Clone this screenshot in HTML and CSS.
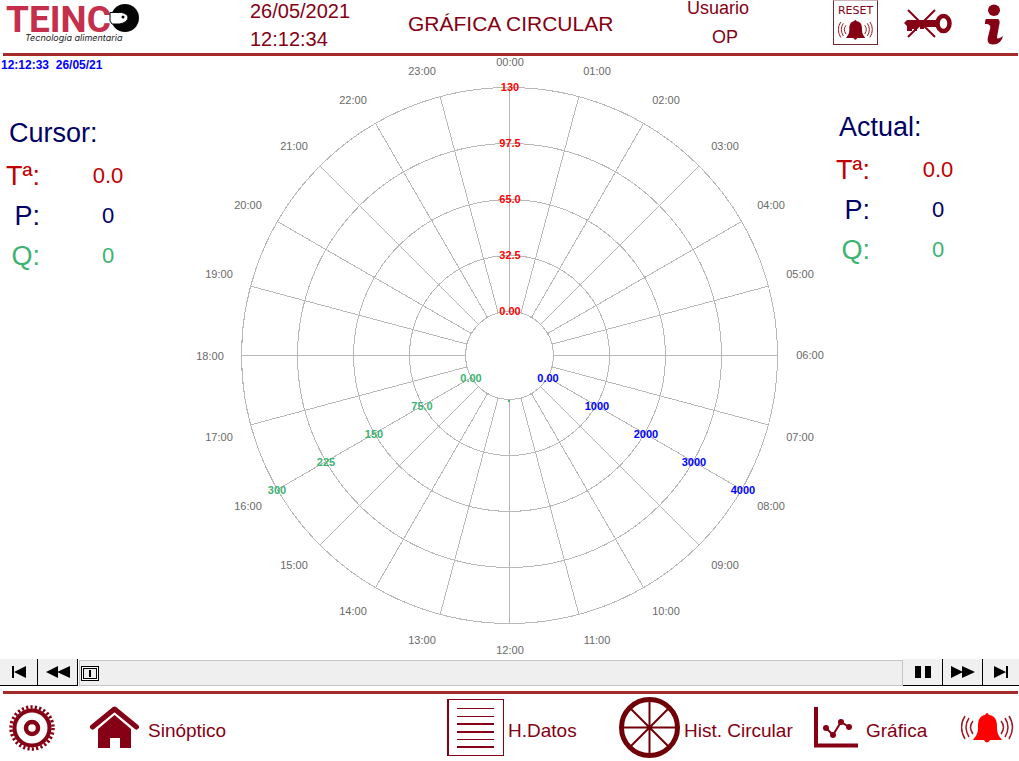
FILE: index.html
```html
<!DOCTYPE html>
<html lang="es">
<head>
<meta charset="utf-8">
<title>Gráfica circular</title>
<link rel="stylesheet" href="styles.css">
</head>
<body>
<header class="topbar">
  <svg class="logo" viewBox="0 0 142 46" role="img" aria-label="Teinco">
    <text class="logo-name" x="6" y="32">TEINC</text>
    <circle cx="125" cy="18" r="14" fill="#050505"/>
    <path d="M110 12.500 H118 C123 12 128 14 128 18 C127 22 122 24 118 24 L112 24 L110 21 Z" fill="#fff" stroke="#050505" stroke-width="1"/>
    <circle cx="123" cy="17" r="1.500" fill="#050505"/>
    <text class="logo-tag" x="25" y="41">Tecnología alimentaria</text>
  </svg>
  <div class="clock"><span>26/05/2021</span><span>12:12:34</span></div>
  <h1 class="title">GRÁFICA CIRCULAR</h1>
  <div class="user"><span>Usuario</span><span class="user-name">OP</span></div>
  <button class="reset" type="button">RESET
    <svg width="36" height="22" viewBox="0 0 54 32" aria-hidden="true"><use href="#bell"/></svg>
  </button>
  <button class="icon-btn" type="button" aria-label="Sin llave">
    <svg width="48" height="48" viewBox="904 0 48 48">
      <path d="M908 10 L935 37 M935 10 L908 37" stroke="#850014" stroke-width="2" fill="none"/>
      <path d="M904 23 L907 20 H938 V27 H924 V29 H920 V27 H917 V31 H914 V29 H912 V31 H907 V26 Z" fill="#850014"/>
      <ellipse cx="943.500" cy="23.500" rx="6" ry="7.500" fill="none" stroke="#850014" stroke-width="4.500"/>
    </svg>
  </button>
  <button class="icon-btn" type="button" aria-label="Información">
    <svg width="20" height="48" viewBox="984 0 20 48">
      <ellipse cx="994" cy="10.300" rx="6" ry="5.700" fill="#850014"/>
      <path d="M986 19 H998 C1000 20 1000 23 999 26 L997 37 C997 40 1000 38 1003 36 C1002 41 998 44.500 993 44.500 C988 44.500 987 41 988 37 L990 29 C991 26 990 24 985 24 C985 22 985 20 986 19 Z" fill="#850014"/>
    </svg>
  </button>
</header>
<div class="rule rule-top"></div>

<main class="stage">
  <section class="panel">
    <p class="stamp">12:12:33&nbsp; 26/05/21</p>
    <h2>Cursor:</h2>
    <dl>
      <dt class="temp">Tª:</dt><dd class="temp">0.0</dd>
      <dt class="pres">P:</dt><dd class="pres">0</dd>
      <dt class="flow">Q:</dt><dd class="flow">0</dd>
    </dl>
  </section>

  <svg class="chart" viewBox="190 56 639 602" role="img" aria-label="Gráfica circular de 24 horas">
    <g class="grid">
      <circle cx="509.500" cy="355.500" r="44"/>
      <circle cx="509.500" cy="355.500" r="100"/>
      <circle cx="509.500" cy="355.500" r="156"/>
      <circle cx="509.500" cy="355.500" r="212"/>
      <circle cx="509.500" cy="355.500" r="268"/>
      <g transform="translate(509.500 355.500)">
        <g id="spokes">
          <path id="spoke" d="M0 -44 V-268"/>
          <use href="#spoke" transform="rotate(15)"/>
          <use href="#spoke" transform="rotate(30)"/>
          <use href="#spoke" transform="rotate(45)"/>
          <use href="#spoke" transform="rotate(60)"/>
          <use href="#spoke" transform="rotate(75)"/>
        </g>
        <use href="#spokes" transform="rotate(90)"/>
        <use href="#spokes" transform="rotate(180)"/>
        <use href="#spokes" transform="rotate(270)"/>
      </g>
    </g>
    <path d="M508 400h2v2h-2z" fill="#3cb371"/>
    <g class="hours">
      <text x="510" y="66">00:00</text><text x="597" y="75">01:00</text>
      <text x="666" y="104">02:00</text><text x="725" y="150">03:00</text>
      <text x="771" y="209">04:00</text><text x="800" y="278">05:00</text>
      <text x="810" y="359">06:00</text><text x="800" y="441">07:00</text>
      <text x="771" y="510">08:00</text><text x="725" y="569">09:00</text>
      <text x="666" y="615">10:00</text><text x="597" y="644">11:00</text>
      <text x="510" y="654">12:00</text><text x="422" y="644">13:00</text>
      <text x="353" y="615">14:00</text><text x="294" y="569">15:00</text>
      <text x="248" y="510">16:00</text><text x="219" y="441">17:00</text>
      <text x="210" y="360">18:00</text><text x="219" y="278">19:00</text>
      <text x="248" y="209">20:00</text><text x="294" y="150">21:00</text>
      <text x="353" y="104">22:00</text><text x="422" y="75">23:00</text>
    </g>
    <g class="scale scale-temp">
      <text x="510" y="91">130</text><text x="510" y="147">97.5</text><text x="510" y="203">65.0</text>
      <text x="510" y="259">32.5</text><text x="510" y="315">0.00</text>
    </g>
    <g class="scale scale-pres">
      <text x="548" y="382">0.00</text><text x="597" y="410">1000</text><text x="646" y="438">2000</text>
      <text x="694" y="466">3000</text><text x="743" y="494">4000</text>
    </g>
    <g class="scale scale-flow">
      <text x="471" y="382">0.00</text><text x="422" y="410">75.0</text><text x="374" y="438">150</text>
      <text x="326" y="466">225</text><text x="277" y="494">300</text>
    </g>
  </svg>

  <section class="panel panel-now">
    <h2>Actual:</h2>
    <dl>
      <dt class="temp">Tª:</dt><dd class="temp">0.0</dd>
      <dt class="pres">P:</dt><dd class="pres">0</dd>
      <dt class="flow">Q:</dt><dd class="flow">0</dd>
    </dl>
  </section>
</main>

<div class="player">
  <button type="button" aria-label="Inicio"><svg width="14" height="12" viewBox="0 0 14 12"><path d="M0 0h2v12H0zM14 0v12L2 6z"/></svg></button>
  <button type="button" aria-label="Atrás"><svg width="24" height="12" viewBox="0 0 24 12"><path d="M12 0v12L0 6zM24 0v12L11 6z"/></svg></button>
  <div class="track"><button class="thumb" type="button" aria-label="Posición"><span></span></button></div>
  <button type="button" aria-label="Pausa"><svg width="16" height="12" viewBox="0 0 16 12"><path d="M0 0h6v12H0zM10 0h6v12h-6z"/></svg></button>
  <button type="button" aria-label="Adelante"><svg width="24" height="12" viewBox="0 0 24 12"><path d="M0 0v12L12 6zM11 0v12L24 6z"/></svg></button>
  <button type="button" aria-label="Final"><svg width="14" height="12" viewBox="0 0 14 12"><path d="M0 0v12L12 6zM12 0h2v12h-2z"/></svg></button>
</div>
<div class="rule rule-bottom"></div>

<nav class="menu">
  <a href="#ajustes" aria-label="Ajustes">
    <svg width="46" height="46" viewBox="-23 -23 46 46" fill="none" stroke="#850014">
      <circle r="17.500" stroke-width="4"/>
      <circle r="21" stroke-width="3.500" stroke-dasharray="2.200 2.198"/>
      <circle r="6" stroke-width="4.500"/>
    </svg>
  </a>
  <a href="#sinoptico">
    <svg width="50" height="44" viewBox="0 0 50 44">
      <path d="M2.500 21 L24.500 3 L46.500 21" fill="none" stroke="#850014" stroke-width="5" stroke-linecap="round" stroke-linejoin="round"/>
      <path d="M8 23 L24.500 9 L41 23 V42 H30 V32 H20 V42 H8 Z" fill="#850014"/>
    </svg>
    <span>Sinóptico</span>
  </a>
  <a href="#datos">
    <svg width="57" height="57" viewBox="0 0 57 57" fill="#850014">
      <path d="M0 0h57v57H0zM2 1v55h54V1z" fill-rule="evenodd"/>
      <path d="M10 9h37v1H10zM10 17h37v1H10zM10 24h37v2H10zM10 32h37v2H10zM10 40h37v1H10zM10 47h37v2H10z"/>
    </svg>
    <span>H.Datos</span>
  </a>
  <a href="#circular">
    <svg width="61" height="61" viewBox="-30.500 -30.500 61 61" fill="none" stroke="#700008">
      <circle r="28" stroke-width="5"/>
      <path d="M0 -27V27M-27 0H27M-19 -19L19 19M19 -19L-19 19" stroke-width="2"/>
    </svg>
    <span>Hist. Circular</span>
  </a>
  <a href="#grafica">
    <svg width="44" height="41" viewBox="0 0 44 41" fill="none" stroke="#850014">
      <path d="M2 0V38.500H44" stroke-width="4"/>
      <path d="M12 21 L19 28 L27 15 L35 20" stroke-width="2"/>
      <g fill="#850014" stroke="none"><circle cx="12" cy="21" r="3"/><circle cx="19" cy="28" r="3"/><circle cx="27" cy="15" r="3"/><circle cx="35" cy="20" r="3"/></g>
    </svg>
    <span>Gráfica</span>
  </a>
  <a class="alarm" href="#alarmas" aria-label="Alarmas">
    <svg width="54" height="32" viewBox="0 0 54 32">
      <g id="bell">
        <path class="bell-body" d="M24 3 Q26 -1 28 3 C35 4 36 9 36 15 C36 22 38 24 41 28 H29 Q26 33 23 28 H12 C15 24 17 22 17 15 C17 9 18 4 24 3 Z"/>
        <path d="M12 9Q7 15 12 22M8 6Q2 15 8 25M4 4Q-3 15 4 27M40 9Q45 15 40 22M44 6Q50 15 44 25M48 4Q55 15 48 27" fill="none" stroke="#a01822" stroke-width="1.500"/>
      </g>
    </svg>
  </a>
</nav>
</body>
</html>
```
FILE: styles.css
```css
* { box-sizing: border-box; }

body {
  margin: 0;
  min-height: 100vh;
  display: flex;
  flex-direction: column;
  background: #fff;
  color: #850014;
  font-family: "Liberation Sans", Arial, sans-serif;
}

button {
  padding: 0;
  border: 0;
  background: none;
  color: inherit;
  font: inherit;
}

svg { display: block; flex: none; }

.topbar {
  height: 53px;
  display: grid;
  grid-template-columns: 250fr 158fr 279fr 146fr 71fr 80fr 35fr;
  align-items: start;
  justify-items: start;
}

.logo { width: 142px; height: 46px; overflow: visible; }
.logo-name { font: 700 37px Roboto, sans-serif; fill: #c4304b; }
.logo-tag { font: italic 9px Inter, sans-serif; fill: #222; }

.clock, .user { display: flex; flex-direction: column; white-space: nowrap; }
.clock { gap: 7px; padding-top: 1px; font-size: 20px; line-height: 21px; }
.title { margin: 0; font-size: 21px; font-weight: 400; line-height: 48px; white-space: nowrap; }
.user { gap: 12px; font-size: 18px; line-height: 17px; }
.user-name { padding-left: 25px; }

.reset {
  width: 45px;
  height: 45px;
  display: flex;
  flex-direction: column;
  align-items: center;
  justify-content: space-between;
  padding: 3px 0;
  border: 1px solid #6b2a35;
  border-top-color: #c9b3b7;
  font: 11px/14px "DejaVu Sans", sans-serif;
}
.bell-body { fill: currentColor; }

.rule { height: 3px; margin: 0 1px 0 3px; background: #a52a2a; }
.rule-bottom { margin-top: 5px; }

.stage {
  flex: 1;
  display: grid;
  grid-template-columns: 190px 1fr 190px;
}
.chart { width: 100%; height: 602px; }

.panel h2 {
  margin: 43px 0 7px 9px;
  color: #000064;
  font-size: 27px;
  font-weight: 400;
  line-height: 32px;
}
.panel-now { padding-left: 1px; }
.panel-now h2 { margin-top: 55px; }
.stamp {
  margin: 0 0 0 1px;
  color: #00f;
  font-size: 12px;
  font-weight: 700;
  line-height: 18px;
}
.panel dl {
  margin: 0;
  display: grid;
  grid-template-columns: 40px 60px;
  column-gap: 38px;
  grid-auto-rows: 40px;
  align-items: center;
}
.panel dt { font-size: 27px; text-align: right; white-space: nowrap; }
.panel dd { margin: 0; font-size: 22px; text-align: center; }
.temp { color: #c00000; }
.pres { color: #000064; }
.flow { color: #3cb371; }

.grid { fill: none; stroke: #b8b8b8; stroke-width: 1; shape-rendering: crispEdges; }
.hours { font-size: 11px; text-anchor: middle; fill: #696969; }
.scale { font-size: 11px; font-weight: 700; text-anchor: middle; }
.scale-temp { fill: #f00; }
.scale-pres { fill: #00f; }
.scale-flow { fill: #3cb371; }

.player {
  height: 27px;
  margin-top: 1px;
  display: flex;
}
.player > button {
  width: 40px;
  display: flex;
  align-items: center;
  justify-content: center;
  border-right: 1px solid #000;
  border-bottom: 1px solid #000;
  background: #f0f0f0;
  color: #000;
}
.player > button:first-child { width: 38px; }
.player > button:last-child { width: 36px; border-right: 0; }
.track {
  flex: 1;
  display: flex;
  align-items: center;
  margin: 1px 0 0 1px;
  padding-left: 1px;
  border: 1px solid #c4c4c4;
  background: #efefef;
}
.thumb {
  width: 18px;
  height: 15px;
  padding: 1px;
  border: 1px solid #000;
  background: #fff;
}
.thumb span {
  height: 11px;
  display: block;
  border: 1px solid #000;
  background: linear-gradient(#000, #000) center / 2px 7px no-repeat #efefef;
}

.menu {
  height: 67px;
  padding-left: 9px;
  display: grid;
  grid-template-columns: 81fr 357fr 172fr 195fr 147fr 58fr;
  align-items: center;
}
.menu a {
  display: flex;
  align-items: center;
  gap: 4px;
  color: inherit;
  font-size: 19px;
  line-height: 22px;
  text-decoration: none;
  white-space: nowrap;
}
.menu span { padding-top: 6px; }
.menu a[href="#sinoptico"], .menu a[href="#grafica"] { gap: 8px; }
.menu .alarm { color: #f00; }
```
